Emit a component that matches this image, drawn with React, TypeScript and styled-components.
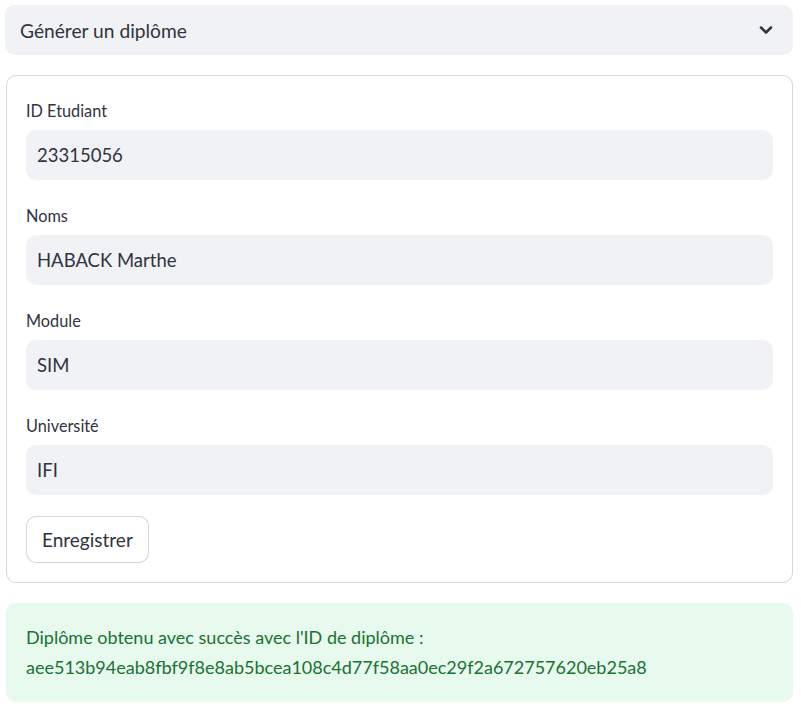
import React from "react";
import styled, { createGlobalStyle } from "styled-components";

const Global = createGlobalStyle`
  html, body { margin: 0; padding: 0; background: #ffffff; }
  body { font-family: "Lato", "Open Sans", sans-serif; color: #31333f; }
  * { box-sizing: border-box; }
`;

const Page = styled.div`
  width: 801px;
  padding: 5px 8px 0 5px;
  display: flex;
  flex-direction: column;
  gap: 20px;
`;

const ExpanderHeader = styled.div`
  height: 50px;
  background: #f0f2f6;
  border-radius: 10px;
  display: flex;
  align-items: center;
  justify-content: space-between;
  padding: 0 17px 0 15px;
  font-size: 19.2px;
  color: #31333f;
`;

const Form = styled.div`
  margin-left: 1px;
  border: 1px solid rgba(49, 51, 63, 0.2);
  border-radius: 10px;
  padding: 20px 19px 19px 19px;
  display: flex;
  flex-direction: column;
`;

const Field = styled.div`
  display: flex;
  flex-direction: column;
  margin-bottom: 21px;
`;

const Label = styled.label`
  height: 29px;
  margin-bottom: 5px;
  display: flex;
  align-items: center;
  font-size: 16.3px;
  color: #31333f;
`;

const Input = styled.div`
  height: 50px;
  background: #f0f2f6;
  border-radius: 10px;
  display: flex;
  align-items: center;
  padding: 0 11px;
  font-size: 18.5px;
  color: #31333f;
`;

const Button = styled.button`
  align-self: flex-start;
  height: 47px;
  padding: 0 15px;
  background: #ffffff;
  border: 1px solid rgba(49, 51, 63, 0.2);
  border-radius: 10px;
  font-family: inherit;
  font-size: 19px;
  color: #31333f;
`;

const Success = styled.div`
  margin-left: 1px;
  background: #e8f9ee;
  border-radius: 10px;
  padding: 19px 20px 20px 20px;
  color: #177233;
  font-size: 18px;
  line-height: 30px;
`;

const fields = [
  { label: "ID Etudiant", value: "23315056" },
  { label: "Noms", value: "HABACK Marthe" },
  { label: "Module", value: "SIM" },
  { label: "Université", value: "IFI" },
];

export default function App() {
  return (
    <>
      <Global />
      <Page>
        <ExpanderHeader>
          <span>Générer un diplôme</span>
          <svg width="20" height="20" viewBox="0 0 24 24" fill="none" stroke="#31333f" strokeWidth="3" strokeLinecap="round" strokeLinejoin="round">
            <path d="M6 9l6 6 6-6" />
          </svg>
        </ExpanderHeader>
        <Form>
          {fields.map((f) => (
            <Field key={f.label}>
              <Label>{f.label}</Label>
              <Input>{f.value}</Input>
            </Field>
          ))}
          <Button>Enregistrer</Button>
        </Form>
        <Success>
          Diplôme obtenu avec succès avec l'ID de diplôme :
          <br />
          aee513b94eab8fbf9f8e8ab5bcea108c4d77f58aa0ec29f2a672757620eb25a8
        </Success>
      </Page>
    </>
  );
}
